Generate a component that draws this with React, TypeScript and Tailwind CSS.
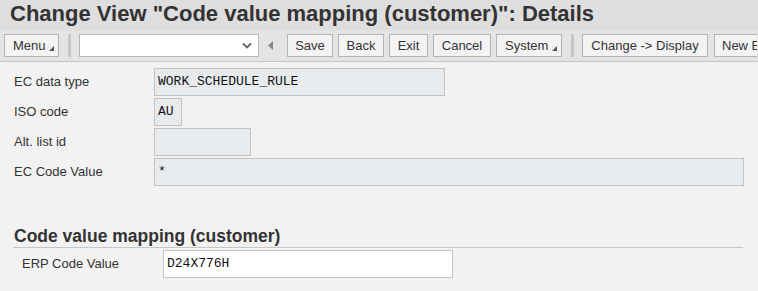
import React from 'react';

const sans = 'font-[Liberation_Sans,Arial,sans-serif]';
const mono = 'font-[family-name:Liberation_Mono,Courier_New,monospace]';

function Corner() {
  return (
    <svg width="5" height="5" viewBox="0 0 5 5" className="absolute right-[4px] bottom-[5px]">
      <polygon points="5,0 5,5 0,5" fill="#555" />
    </svg>
  );
}

function ToolButton({ label, width, menu }: { label: string; width: string; menu?: boolean }) {
  return (
    <div
      className={`relative h-[23px] ${width} shrink-0 border border-[#b3b3b3] bg-[#f3f3f3] text-[13px] leading-[21px] text-[#333] ${menu ? 'pl-[8px] text-left' : 'text-center'}`}
    >
      {label}
      {menu && <Corner />}
    </div>
  );
}

function Separator() {
  return <div className="h-[23px] w-[3px] shrink-0 bg-[#c6c6c6]" />;
}

function Field({ label, value, width }: { label: string; value: string; width: string }) {
  return (
    <div className="flex h-[28px] items-center">
      <div className="w-[154px] shrink-0 pl-[14px] text-[13px] text-[#333]">{label}</div>
      <div
        className={`h-[28px] ${width} shrink-0 border border-[#c3c3c3] bg-[#e8ebee] pl-[3px] ${mono} text-[13px] leading-[26px] text-[#111]`}
      >
        {value}
      </div>
    </div>
  );
}

export default function App() {
  return (
    <div className={`w-[758px] h-[291px] overflow-hidden bg-[#f2f2f2] ${sans}`}>
      {/* Title */}
      <div className="h-[30px] bg-[#dedede] pl-[10px] text-[22px] font-bold leading-[28px] text-[#333] whitespace-nowrap">
        Change View "Code value mapping (customer)": Details
      </div>

      {/* Toolbar */}
      <div className="flex h-[32px] items-center border-b border-[#c4c4c4] bg-[#e4e4e4] pl-[4px] whitespace-nowrap">
        <ToolButton label="Menu" width="w-[55px]" menu />
        <div className="ml-[9px]">
          <Separator />
        </div>
        <div className="ml-[8px] flex h-[23px] w-[180px] shrink-0 items-center justify-end border border-[#b8b8b8] bg-white pr-[6px]">
          <svg width="10" height="7" viewBox="0 0 10 7">
            <polyline points="1,1.5 5,5.5 9,1.5" fill="none" stroke="#666" strokeWidth="1.8" />
          </svg>
        </div>
        <svg width="6" height="9" viewBox="0 0 6 9" className="ml-[9px] shrink-0">
          <polygon points="5,0 5,9 0,4.5" fill="#888" />
        </svg>
        <div className="ml-[13px] flex gap-[5px]">
          <ToolButton label="Save" width="w-[46px]" />
          <ToolButton label="Back" width="w-[46px]" />
          <ToolButton label="Exit" width="w-[39px]" />
          <ToolButton label="Cancel" width="w-[58px]" />
          <ToolButton label="System" width="w-[66px]" menu />
        </div>
        <div className="ml-[9px]">
          <Separator />
        </div>
        <div className="ml-[8px] flex gap-[6px]">
          <ToolButton label="Change -> Display" width="w-[126px]" />
          <div className="h-[23px] w-[43px] shrink-0 overflow-hidden border-y border-l border-[#b3b3b3] bg-[#f3f3f3] pl-[7px] text-[13px] leading-[21px] text-[#333]">
            New Entries
          </div>
        </div>
      </div>

      {/* Details form */}
      <div className="flex flex-col gap-[2px] pt-[6px]">
        <Field label="EC data type" value="WORK_SCHEDULE_RULE" width="w-[291px]" />
        <Field label="ISO code" value="AU" width="w-[28px]" />
        <Field label="Alt. list id" value="" width="w-[97px]" />
        <Field label="EC Code Value" value="*" width="w-[590px]" />
      </div>

      {/* Section */}
      <div className="ml-[13px] mt-[39px] h-[23px] w-[730px] border-b border-[#c6c6c6] pl-[1px] text-[17.5px] font-bold leading-[22px] text-[#333]">
        Code value mapping (customer)
      </div>
      <div className="mt-[2px] flex h-[28px] items-center">
        <div className="w-[163px] shrink-0 pl-[22px] text-[13px] text-[#333]">ERP Code Value</div>
        <div className={`h-[28px] w-[290px] shrink-0 border border-[#c3c3c3] bg-white pl-[3px] ${mono} text-[13px] leading-[26px] text-[#111]`}>
          D24X776H
        </div>
      </div>
    </div>
  );
}
